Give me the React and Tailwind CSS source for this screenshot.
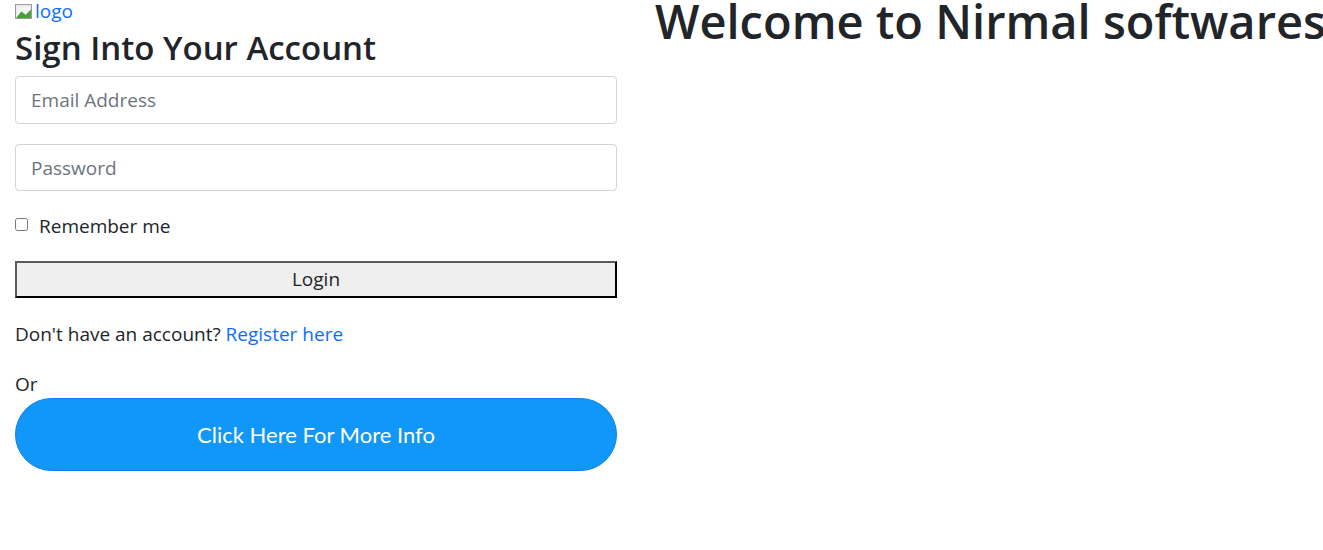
import React from 'react';

function BrokenImage() {
    return (
        <svg width="17" height="17" viewBox="0 0 16 16" className="inline-block mr-[3px] shrink-0">
            <rect x="0.5" y="1.5" width="15" height="13" fill="#f3f3f3" stroke="#9a9a9a" />
            <path d="M1 14 L6 8 L10 11 L15 6 L15 14 Z" fill="#4a9e3a" />
        </svg>
    );
}

function App() {
    return (
        <div className="flex bg-white text-[#212529] font-['Segoe_UI','Open_Sans',sans-serif] min-h-[550px]">
            <div className="w-[602px] ml-[15px] shrink-0">
                <a href="#" className="text-[#0d6efd] text-[19px] leading-[22px] flex items-center">
                    <BrokenImage />
                    <span>logo</span>
                </a>
                <h2 className="text-[33px] leading-[40px] font-semibold mt-[6px] mb-[8px]">Sign Into Your Account</h2>
                <input
                    type="text"
                    placeholder="Email Address"
                    className="block w-full h-[48px] px-[15px] text-[19px] border border-[#ced4da] rounded-[4px] placeholder:text-[#6c757d] outline-none"
                />
                <input
                    type="password"
                    placeholder="Password"
                    className="block w-full h-[47px] mt-[20px] px-[15px] text-[19px] border border-[#ced4da] rounded-[4px] placeholder:text-[#6c757d] outline-none"
                />
                <label className="flex items-center mt-[23px] text-[19px] leading-[24px]">
                    <input type="checkbox" className="w-[13px] h-[13px] mr-[11px] mt-[-4px]" />
                    Remember me
                </label>
                <button className="block w-full h-[37px] mt-[23px] bg-[#efefef] text-[19px] border-2 border-t-[#5a5a5a] border-l-[#5a5a5a] border-b-black border-r-black">
                    Login
                </button>
                <p className="mt-[24px] text-[19px] leading-[24px]">
                    Don't have an account? <a href="#" className="text-[#0d6efd]">Register here</a>
                </p>
                <p className="mt-[26px] text-[19px] leading-[24px]">Or</p>
                <button className="block w-full h-[73px] mt-[2px] bg-[#1196fa] border border-[#0d7ef0] rounded-full text-white text-[22px] font-['Lato',sans-serif]">
                    Click Here For More Info
                </button>
            </div>
            <div className="ml-[38px] whitespace-nowrap">
                <h1 className="text-[47px] leading-[48px] font-semibold mt-[-3px]">Welcome to Nirmal softwares</h1>
            </div>
        </div>
    );
}

export default App;
